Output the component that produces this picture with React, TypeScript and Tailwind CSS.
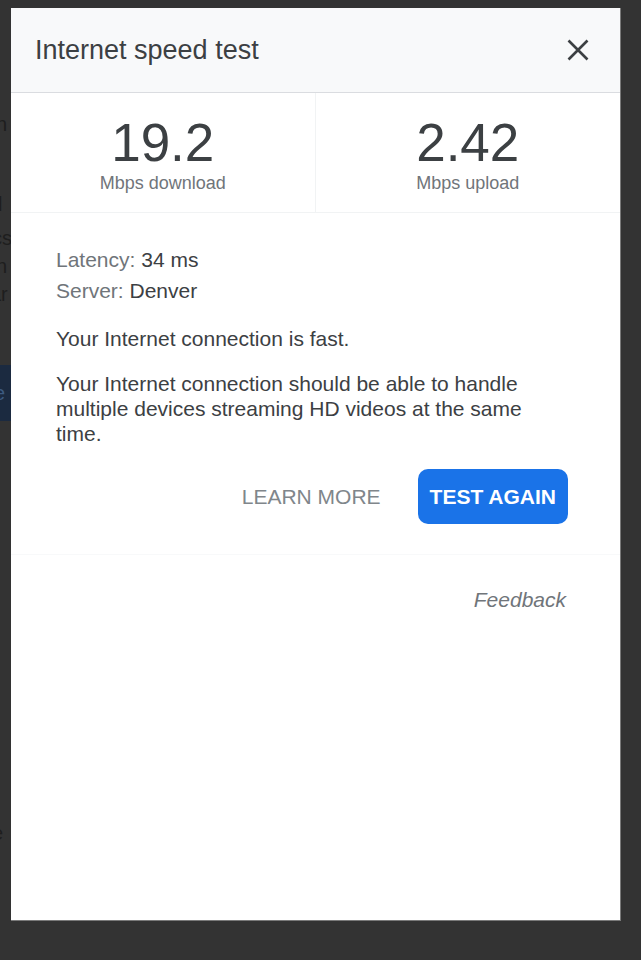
const STATS = [
  { value: '19.2', label: 'Mbps download' },
  { value: '2.42', label: 'Mbps upload' },
]

export default function App() {
  return (
    <div
      className="flex h-[960px] w-[641px] overflow-hidden bg-[#333333]"
      style={{ fontFamily: '"Liberation Sans", Arial, sans-serif' }}
    >
      {/* dimmed page behind the dialog */}
      <div className="flex w-[11px] shrink-0 flex-col overflow-hidden text-[20px] leading-[24px] text-[#1e1e1e]">
        <div className="ml-[-4px] mt-[112px] whitespace-nowrap">n</div>
        <div className="ml-[-2px] mt-[56px] whitespace-nowrap">l</div>
        <div className="ml-[-8px] mt-[10px] whitespace-nowrap">cs</div>
        <div className="ml-[-4px] mt-[4px] whitespace-nowrap">n</div>
        <div className="ml-[-10px] mt-[4px] whitespace-nowrap">ar</div>
        <div className="mt-[59px] flex h-[56px] flex-col justify-center bg-[#1b2a40] text-[#3d5a80]">
          <div className="ml-[-6px] whitespace-nowrap">e</div>
        </div>
        <div className="ml-[-8px] mt-[400px] whitespace-nowrap">e</div>
      </div>

      {/* dialog */}
      <div className="mt-[8px] flex h-[913px] w-[610px] shrink-0 flex-col border-b border-r border-[#7a7a7a] bg-white">
        <div className="flex h-[85px] shrink-0 items-center justify-between border-b border-[#dadce0] bg-[#f8f9fa] pl-[24px] pr-[31px]">
          <span className="text-[27px] text-[#3c4043]">Internet speed test</span>
          <svg className="size-[22px]" viewBox="0 0 22 22" fill="none" stroke="#3c4043" strokeWidth="2.6">
            <path d="M1.5 1.5l19 19M20.5 1.5l-19 19" />
          </svg>
        </div>

        <div className="grid h-[120px] shrink-0 grid-cols-2 border-b border-[#f1f3f4]">
          {STATS.map((s, i) => (
            <div
              key={s.label}
              className={`flex flex-col items-center pt-[20px] ${i === 0 ? 'border-r border-[#f1f3f4]' : ''}`}
            >
              <span className="text-[53px] leading-[60px] text-[#3c4043]">{s.value}</span>
              <span className="text-[18px] leading-[20px] text-[#70757a]">{s.label}</span>
            </div>
          ))}
        </div>

        <div className="flex flex-col border-b border-[#f8f9fa] pb-[30px] pl-[45px] pr-[52px] pt-[31px]">
          <div className="text-[21px] leading-[31px] text-[#3c4043]">
            <span className="text-[#70757a]">Latency:</span> 34 ms
          </div>
          <div className="text-[21px] leading-[31px] text-[#3c4043]">
            <span className="text-[#70757a]">Server:</span> Denver
          </div>
          <p className="mt-[20px] text-[21px] leading-[25px] text-[#3c4043]">Your Internet connection is fast.</p>
          <p className="mt-[20px] text-[21px] leading-[25px] text-[#3c4043]">
            Your Internet connection should be able to handle multiple devices streaming HD videos at the same time.
          </p>
          <div className="mt-[23px] flex items-center justify-end gap-[24px]">
            <button className="px-[13px] text-[21px] text-[#80868b]">LEARN MORE</button>
            <button className="h-[55px] rounded-[10px] bg-[#1a73e8] px-[12px] text-[21px] font-bold text-white">
              TEST AGAIN
            </button>
          </div>
        </div>

        <div className="flex justify-end pr-[54px] pt-[32px]">
          <span className="text-[21px] italic leading-[25px] text-[#70757a]">Feedback</span>
        </div>
      </div>
    </div>
  )
}
